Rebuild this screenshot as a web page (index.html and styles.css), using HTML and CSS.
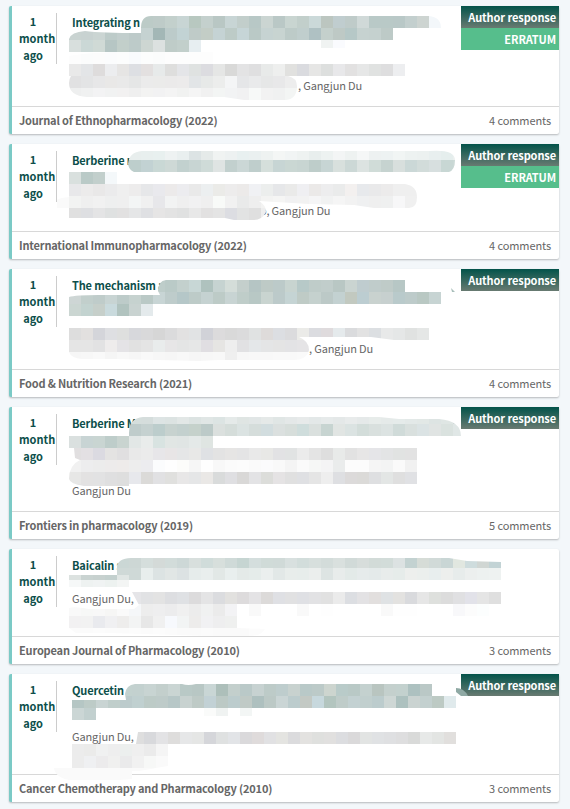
FILE: index.html
```html
<!DOCTYPE html>
<html lang="en">
<head>
    <meta charset="UTF-8" />
    <meta name="viewport" content="width=device-width, initial-scale=1.0"/>
    <title>Publications</title>
    <link rel="stylesheet" href="styles.css">
</head>
<body>
<div class="feed">
    <article class="card">
        <div class="card-body">
            <div class="date">1 month ago</div>
            <div class="info">
                <h2 class="title">Integrating n</h2>
                <p class="authors"><span class="gap" style="width:226px"></span>, Gangjun Du</p>
            </div>
            <div class="badges">
                <span class="badge response">Author response</span>
                <span class="badge erratum">ERRATUM</span>
            </div>
        </div>
        <div class="card-footer"><b>Journal of Ethnopharmacology (2022)</b><span>4 comments</span></div>
        <svg class="mosaic"></svg>
    </article>

    <article class="card short">
        <div class="card-body">
            <div class="date">1 month ago</div>
            <div class="info">
                <h2 class="title">Berberine r</h2>
                <p class="authors"><span class="gap" style="width:188px"></span>o, Gangjun Du</p>
            </div>
            <div class="badges">
                <span class="badge response">Author response</span>
                <span class="badge erratum">ERRATUM</span>
            </div>
        </div>
        <div class="card-footer"><b>International Immunopharmacology (2022)</b><span>4 comments</span></div>
        <svg class="mosaic"></svg>
    </article>

    <article class="card">
        <div class="card-body">
            <div class="date">1 month ago</div>
            <div class="info">
                <h2 class="title">The mechanism a</h2>
                <p class="authors"><span class="gap" style="width:237px"></span>, Gangjun Du</p>
            </div>
            <div class="badges">
                <span class="badge response">Author response</span>
            </div>
        </div>
        <div class="card-footer"><b>Food &amp; Nutrition Research (2021)</b><span>4 comments</span></div>
        <svg class="mosaic"></svg>
    </article>

    <article class="card tall">
        <div class="card-body">
            <div class="date">1 month ago</div>
            <div class="info">
                <h2 class="title">Berberine M</h2>
                <p class="authors">Gangjun Du</p>
            </div>
            <div class="badges">
                <span class="badge response">Author response</span>
            </div>
        </div>
        <div class="card-footer"><b>Frontiers in pharmacology (2019)</b><span>5 comments</span></div>
        <svg class="mosaic"></svg>
    </article>

    <article class="card short">
        <div class="card-body">
            <div class="date">1 month ago</div>
            <div class="info">
                <h2 class="title">Baicalin s</h2>
                <p class="authors more">Gangjun Du,</p>
            </div>
        </div>
        <div class="card-footer"><b>European Journal of Pharmacology (2010)</b><span>3 comments</span></div>
        <svg class="mosaic"></svg>
    </article>

    <article class="card">
        <div class="card-body">
            <div class="date">1 month ago</div>
            <div class="info">
                <h2 class="title">Quercetin</h2>
                <p class="authors more">Gangjun Du, </p>
            </div>
            <div class="badges">
                <span class="badge response">Author response</span>
            </div>
        </div>
        <div class="card-footer"><b>Cancer Chemotherapy and Pharmacology (2010)</b><span>3 comments</span></div>
        <svg class="mosaic"></svg>
    </article>
</div>

<script>
    // one entry per card: groups of { clip, rows }, a row is [x, y, height, colours of 12px cells]
    const mosaics = [
        [
            { clip: 'M132 22 Q132 10 142 10 H420 Q432 11 432 22 H384 V46 H192 V46 H60 V33 Q62 26 76 25 Q92 27 132 27Z', rows: [
                [132, 10, 12, 'bccbc7 becbc8 c3d0cc c8d5d4 b8c8c0 c4d0cd b9c7c4 c8d5d5 c2cecb b8c8c6 cbd5d2 bac8c6 c9d5d1 c2cfcb cbd9d9 bcc6c0 c0cdcf bfcbc9 d0d9d8 b9c9c7 b9c9c7 b9c8c7 c3cfce cdd4d1 f3f7fa'],
                [60, 22, 12, 'c9d3d1 c8d2d1 cbd5d3 bdcbc9 c2cecd bdcac9 c5d2d1 a3b7b6 bccbca c2d3d4 bfcbc8 c3cdc6 c5d3d4 bdcbc7 c6d5d7 bac9c6 c6d3d2 c8d4d1 bdcbc8 c0cecd afc1c3 c4d0cc bec9c5 b6c8c7 c6d2d0 c5d1cf bdcac7'],
                [60, 34, 12, 'd8dfdd cbd8d6 d0dad6 b6c6c4 c2cfca bdcbc9 cdd6d2 dce1e0 bfccc8 c2cfcb e7eef1']
            ] },
            { clip: 'M60 50 Q75 47 108 46 H204 V58 H396 V70 H279 Q288 72 288 80 Q288 93 277 94 H235 L215 91 H78 Q60 90 60 77 Q60 73 62 70 H60Z', rows: [
                [60, 46, 12, 'fdfdfd fbfcfc fcfcfc fbfcfd fcfdfd f9fbfd fcfdfd fbfcfc fdfdfd fdfdfd fdfdfd fdfdfd'],
                [60, 58, 12, 'e9e9e9 e3e5e7 dedcdc ecedef e6e5e4 dddfe3 e3e0e0 e7eaea dededd e4e5e8 dfe2e1 dcdce0 e5e6e5 d9d9d8 e3e3e4 dfdfe0 e8eae9 eeefee e1e1df dadbdf e6e6e5 dddfde e8e8ea e2e1e1 e6e7e7 e0e2e1 dededf edeef0'],
                [60, 70, 12, 'e1e1e2 e3e4e5 e7e7e8 e9e8e7 e9e9e9 e5e6e6 ebebeb ebebea ebeaea ecebeb e2e5e7 e7e9e8 ecedec f4f5f6 e5e6e8 e9eaeb e6e7e7 e8e8e9 ededed'],
                [60, 82, 12, 'eeefef f0f1f1 f3f3f4 f1f2f2 f2f1f1 efefef f3f3f2 f2f2f3 f4f4f4 f1f2f1 f5f5f5 f1f1f1 f3f5f4 f2f3f4 f1f1f2 f7f9f8 f2f2f2 f0f1f1 f3f5f4']
            ] }
        ],
        [
            { clip: 'M119 20 Q120 8 133 7 H420 Q446 5 446 16 Q446 26 440 28 H108 V40 H60 V28 H125 Q120 26 119 20Z', rows: [
                [108, 4, 12, 'e8eeed e8eeed e8efee e8f0ef eef2f2 e9efef dce3e4 e5eae9 f0f3f2 edf1f1 e8f0f0 eaf0f0 eef2f1 f4f6f5 f1f4f4 eef2f1 e8eeed edf2f1 f3f5f5 eef2f1 f5f7f7 edf1f1 edf2f2 f1f5f4 edf2f1 ecf1f0 e8efef e5eeed ebf0ef'],
                [108, 16, 12, 'bdcecc bdcecc c2d2d3 c9d8d5 ced9d6 c2d1cf c8d5d3 cfdbd8 dfe4e3 c2d0ce cbd7d6 bfcecc d5dfdb c7d5d4 cad7d3 c8d5d2 becdca c7d5d4 d8e0dd ccd8d6 dce3e1 d0dcd8 c6d3d0 d8dfdd cbd8d7 d2dcda d7dfdf c8d7d4 cbd9d6'],
                [60, 28, 12, 'd9e0de bacac7 c2cfcc f4f8fa']
            ] },
            { clip: 'M60 40 H396 Q408 42 408 53 Q408 64 400 64 H365 L345 61 L300 60 L250 57 Q257 61 257 68 Q253 76 245 76 H225 L216 74 H60 V64 H40 Q43 56 53 54 L60 53Z', rows: [
                [60, 40, 12, 'e8e8ea ecebeb e9e8e8 ebebec efefef edecec e6e7e9 e9e9ed eceaea ececef e9e9e9 eceff0 ebebe8 edecec eceae9 f0f1f4 eceeed e6e7e9 eaeae9 efeff2 ebe9e8 ededee eaebeb f3f0ef e7e9ec e9e9ea ecebeb efefef efefef'],
                [48, 52, 12, 'fafafa f2f3f2 efefef f1f1f1 eeefef efefef f3f5f5 f0f0f0 e7e7ea f2f3f3 efefef f1f1f2 efefef f8faf8 f1f1f1 e9eaea eeeeee f3f3f2 f5f5f4 f1f1f2 f2f2f2 f5f5f6 f1f2f2 f5f5f5 f2f2f2 eff0f1 efefef eff0f0 f7f7f8 f0f0f0'],
                [60, 64, 12, 'e0e0e0 dedfe2 e4e4e5 dfe1e1 e2e1e1 e5e6e7 dfe0e3 e6e5e5 e3e3e3 e0e1e1 e8e8e8 e2e1e1 e4e4e4 dcdde2 e2e3e3 dfdfdf eeeeee']
            ] }
        ],
        [
            { clip: 'M149 22 Q149 12 157 11 H396 V23 H432 V35 H144 V47 H60 V28 Q66 26 90 26 H151Z', rows: [
                [144, 11, 12, 'becdca bacac7 c3d0cd c8d7d6 afc2be c6d3d1 d4ddd9 c4cfcc b5c5c4 becac6 bccac9 c8d4d0 b7c9c8 bfccc9 c1cdcb b9c7c4 cad4d1 bfcccf c0cccb bfcbc8 b7c7c5 d3dad8'],
                [60, 23, 12, 'ced6d5 c2cfcc bfccca c8d4d3 bdcbc9 c6d2cf bac9c6 c8d5d5 becccb b5c7c8 bdcbc8 c5d2d1 bdcbc7 c8d4d3 bfcdc9 b8c8c5 c9d4d0 bccaca c5d4d4 bfcbc6 c5d1ce bcc9c7 c3d1d1 c2c9c0 bccdd1 c9d2cf c7d0cf b9cacb bdcbca b9c8c3 c7d4d3'],
                [60, 35, 12, 'cbd6d2 c3d3d0 c6cfca c9dadd b1c3bf c9d3d1 e4eaec']
            ] },
            { clip: 'M60 59 H420 V71 H385 L362 68 H290 Q300 72 300 81 Q298 91 284 91 H210 L190 92 L105 90 H73 Q62 89 60 83Z', rows: [
                [60, 59, 12, 'dddddd e2e0df d4d5da dedfe2 dedfde d7d8dc d9d9da d6d6d6 dbdbdc e2e1e1 e1e3e4 d1d2d8 dcdbdc d9d9d9 dbdbdc e0e2e2 dedbda dcdee2 dbdbdd ebebe8 dbdce0 dfdbdd e5eaec dadbdd e2e2e2 dcdfe2 e8e9e9 e5e7e7 e0e2e1 e5e7e6'],
                [60, 71, 12, 'e5e5e5 e5e5e5 e2e2e3 eeecec e4e3e6 e1e1e1 e4e4e4 e9ecec e7e6e7 e4e5e5 e6e7e7 e0dee2 e6e5e3 eeeeee e1e1e3 e4e7e9 e4e5e6 e4e4e4 e3e3e5 e5e4e6'],
                [60, 83, 12, 'f6f6f6 f7f7f7 f9f9f9 f5f5f5 f8f8f8 f6f6f6 f9f9f9 f7f7f7 f6f6f6 f8f8f8 f6f6f6 f7f7f7 f8f8f8 efefef f7f7f7 f8f8f8 f8f8f8 f9f9f9 f9f9f9 fafafa']
            ] },
            { clip: 'M442 19 L446 23 H443Z', rows: [[442, 18, 6, 'a9bfbb']] }
        ],
        [
            { clip: 'M120 26 Q120 11 134 10 H370 L390 12 H430 Q452 14 452 29 H204 V41 H60 V26 Q76 22 98 25 Q108 28 120 26Z', rows: [
                [120, 5, 12, 'd5dedc d5dddc dde4e4 dce3e2 e2e7e6 dce3e2 e0e6e5 dce4e3 e5eae9 dfe5e3 e1e6e6 e5e9e8 e0e6e5 e4e8e8 e7eaea e3e8e8 e6eaea e4e8e8 e8ebeb e5e9e9 e7ecea e5eae9 e5ebea e3e9e8 e2e8e6 dde4e3 dfe6e4 cfd8d7'],
                [120, 17, 12, 'bfcccb c5d1d0 bccdcc c7d2cf c3d0ce c5d1cb bccac8 dbe0de d5ddda dbe3e2 d5dddb d2dddf dbe0df d7dedb cfdddc dae0de c7d4d1 e1e5e3 dbe3e2 d3ddda d9e0de dce3e2 d0dbd9 d9e0de dbe3e4 e0e4e3 dae2df e0e7e6'],
                [60, 29, 12, 'dae0df c8d4d4 c9d5d2 becdca c9d4d0 e2e7e6 e9eceb d8e3e1 e1e6e4 e0e5e4 e4e9e8 dfe5e2']
            ] },
            { clip: 'M65 41 H408 V77 H120 V79 H75 Q61 77 60 72 Q60 58 71 53 L66 51Z', rows: [
                [60, 41, 12, 'e1dfe0 e3e0e3 dbdae1 e4e3e2 e0dfe0 e9e9e9 ebebeb e7e6e9 e8e5e6 e5e6e7 e8e8e7 dfe1e4 e3e3e3 e6e5e4 e4e4e5 e9e9e9 e8e8e6 e2e2e4 e1e3e3 ebebeb e4e4e4 dedede e8eae9 e2e2e2 e7e6e6 e5e5e8 e3e4e5 e1e3e2 e2e2e2'],
                [60, 53, 12, 'f1f1f1 ededee ececec edebeb eeebea ededed ececef fbfcfd fefefe fcfcfa f6f6f6 fefefe f8f8f8 fbfbfb fcfcfc fafafa fbfbfc f9f9f9 f4f4f4 fafafa f6f7f6 f4f4f5 eaecec fcfcfc fcfcfc f5f5f5 f3f4f4 fafafa f1f1f1'],
                [60, 65, 12, 'e7e7e6 e3e2e2 e2e2e3 dfdfe0 dedede e7e8ec dbdad8 e1e1e3 e0e0de e8e7e7 e5e6e7 eae8e6 d9dbdb dfdfe2 d9d8d7 e3e3e5 dcddda e5e3e4 e0e0e0 dfe0e3 e5e5e5 eeeeee dedfe2 dcdada dbdad8 dedfe1 e3e6e5 dfdfdf e0e1e4'],
                [60, 77, 12, 'e3e3e3 e3e2e3 e3e3e3 e0e0e0 dedede']
            ] }
        ],
        [
            { clip: 'M107 19 Q109 9 122 9 H440 L458 12 L492 13 V31 H120 V38 H60 V26 H108Z', rows: [
                [108, 7, 12, 'cbd7d5 cdd7d5 d5dedc d4dad8 d2dcda cdd8d7 d8dfdd d0dcda d7dfdc cfdad8 c6d5d2 d4dedd d0dbd8 d0dad8 d8e0df d2dddb d7dfdd d3dcda d9e0de d1dad8 d7dddb d2dbd8 d2dcd9 dce2e2 c3d2d1 d6dcd7 d1dad8 c9d6d5 e1e7e0 cedcdd d0d6d3 c2d3d5 dfe5e0 dce5e4'],
                [108, 19, 12, 'cfd9d7 cfd9d7 e8eeed dce3e3 e1e6e5 dce2e3 e6eceb e9eeed e2e8e6 e9efee e4eae8 e5ecea ebefee e2e8e7 e8edeb e7edeb ebeeed dde4e3 e8eceb e3eae8 e6ebeb e4eaea e8eceb e6ecea edefed ebefed e8eeee edefed e7eceb ecefee edf1f0 eef2f1 edf1f0 e6f0ee'],
                [60, 26, 5, 'dce2e0 c9d3d1 c7d1cf c3d0ce e0e6e4'],
                [60, 31, 7, 'f6f8f8 eef2f1 f0f3f3 edf2f0 f3f5f4']
            ] },
            { clip: 'M123 43 H492 V67 H228 V79 L256 80 Q253 87 240 87 H200 L100 84 H67 L60 79 V59 Q65 57 80 60 L125 60 L130 56Z', rows: [
                [120, 43, 12, 'e5e5e8 e1e2e4 e3e3e3 dddee1 dfe1e4 dcdbdc e4e4e5 dbdcdf e2e1df dddbdc e4e3e5 dcdad9 dfe0e4 e1e1e2 dfe0e4 e2e2e4 e1e1e1 ebebeb dcdee2 e3e2e4 e2dfde dfe2e4 e3e2e0 d9dadd e6e6e6 dee0dd dcdcdc e0e0e2 e2e2e9 e5e5e5 dfdfdf f0f6f8'],
                [60, 55, 12, 'f9f9f9 f7f8f7 f8f8f8 f6f6f5 fafafa f5f7f9 ededed eeeeef ececed f0f0f0 ececec f0f1f1 ebebeb f3f3f5 ffffff f9f9f9 ffffff ffffff ffffff f9f9f9 ffffff fefefe ffffff ffffff ffffff ffffff f9f9f9 fefefe fefefe ffffff ffffff ffffff f8f8fa fcfcfc fcfefe'],
                [60, 67, 12, 'f2f1f2 f2f2f2 e9eaee f0f0f2 eeedec f3f4f4 e7e7e7 f0f0f0 f7f9fd f2f4f4 edeceb f1f1f3 eeeeef eff0ef'],
                [60, 79, 8, 'fbfbfb fbfbfb fcfcfc fbfbfb fbfbfb fcfcfc fbfbfb fcfcfc fbfbfb fafafa fafafa fbfbfb fafafa fafafa fafafa fcfcfc fcfcfc']
            ] }
        ],
        [
            { clip: 'M116 20 Q117 11 126 10 H173 Q179 12 187 10 H423 V22 H447 V34 H87 V46 H63 V26 H117Z', rows: [
                [111, 10, 12, 'c3d2cf c3d1cf c8d4d2 c3cfcc cad5d3 b9c9c6 b8c7c4 c9d6d5 adbfba c3cfcc bac9c8 c7d2d1 bdcbc8 becdcd c8d2cf b9c9c8 bccac8 cdd5cf b9cbc9 b9c9c6 c4d1cf b9c5c0 c4d0cd c3d1ce adc1c0 bac8c6'],
                [63, 22, 12, 'b5c6c4 bdcbc7 c9d4d3 c0cecb bccbcc c0d0d0 bdcbc7 becbc9 b7c7c7 c8d2d0 becac6 c2d1d5 bcc9c5 bccccd c0cac6 aec0bf bcc9c6 cad5d5 bccccd c3c9c4 c7d8dd b3c5bf bfccc9 c3d1d2 c1cfce bccccd ced7d5 adc1bf cad3d1 c3d0cf bdcac4 e0eaec'],
                [63, 34, 12, 'cbd6d5 c2d0cf']
            ] },
            { clip: 'M129 58 H447 V70 H159 V92 L130 97 H123 V105 L110 106 H60 Q46 103 45 94 H63 V70 H127Z', rows: [
                [123, 58, 12, 'dedede d8d9dc e3e3e5 dedddc e6e7e8 e5e6e5 d5d6da dfe1e1 e2e4e7 dad9db dfdbdb e1e1e3 e4e4e1 dbdbdd e3e2e0 dfe0de e1e0df dcdde0 dad9da e2e4e3 e0e2e4 dfe0e2 dededf d9dad9 e7e9e8 e3e5e3 e1dfdd e4e5e9 f0f1f0'],
                [63, 70, 12, 'ececec ebebea f0f1f1 eeeeee ecefee efefef ebebeb f5f5f5'],
                [63, 82, 12, 'ececec eff0f2 ecebec f0f0ef eaeaeb f1f1f1 f7f8f7 fafafa'],
                [39, 94, 12, 'fafafa fafafa fafafa fafafa fafafa fafafa fafafa fafafa fafafa fcfcfc']
            ] },
            { clip: 'M447 14 Q455 14 459 22 H452 L447 18Z', rows: [[447, 14, 8, '8fa9a4']] }
        ]
    ];

    // stray single cells that sit outside the main strokes
    const strays = {
        0: [[312, 34, 'f0f3f2'], [324, 34, 'fafbfe']],
        5: [[195, 34, 'fafbfa'], [207, 34, 'f0f3f2'], [231, 34, 'f3f6f5']]
    };

    document.querySelectorAll('.mosaic').forEach((svg, i) => {
        let out = '';
        (strays[i] || []).forEach(([x, y, c]) => {
            out += `<rect x="${x}" y="${y}" width="12" height="8" fill="#${c}"/>`;
        });
        mosaics[i].forEach((group, g) => {
            const id = `stroke-${i}-${g}`;
            out += `<clipPath id="${id}"><path d="${group.clip}"/></clipPath><g clip-path="url(#${id})">`;
            group.rows.forEach(([x, y, h, colors]) => {
                colors.split(' ').forEach((c, n) => {
                    out += `<rect x="${x + n * 12}" y="${y}" width="12" height="${h}" fill="#${c}"/>`;
                });
            });
            out += '</g>';
        });
        svg.innerHTML = out;
    });
</script>
</body>
</html>
```
FILE: styles.css
```css
* {
    box-sizing: border-box;
}
body {
    margin: 0;
    background: #f3f7fa;
    font-family: "Noto Sans CJK SC", "Open Sans", sans-serif;
    font-size: 11px;
    color: #666;
    height: 809px;
    overflow: hidden;
}
.feed {
    display: flex;
    flex-direction: column;
    gap: 10px;
    padding: 6px 11px 7px 9px;
}
.card {
    position: relative;
    height: 128px;
    display: flex;
    flex-direction: column;
    background: #fff;
    border-left: 3px solid #7bcac6;
    border-radius: 2px;
    box-shadow: 0 1px 2px rgba(0,0,0,0.25);
}
.card.short { height: 115px; }
.card.tall { height: 132px; }
.card-body {
    flex: 1;
    display: flex;
    align-items: flex-start;
}
.date {
    width: 45px;
    height: 51px;
    margin-top: 7px;
    padding: 0 9px 0 7px;
    border-right: 1px solid #ccc;
    color: #0d4f4b;
    font-weight: bold;
    font-size: 11px;
    line-height: 17px;
    text-align: center;
}
.info {
    flex: 1;
    align-self: stretch;
    display: flex;
    flex-direction: column;
    padding: 8px 0 13px 15px;
    white-space: nowrap;
}
.title {
    margin: 0;
    color: #0d4f4b;
    font-size: 11px;
    line-height: 16px;
    letter-spacing: -0.15px;
}
.authors {
    margin: auto 0 0;
    line-height: 16px;
    letter-spacing: -0.15px;
}
.authors.more { margin-bottom: 17px; }
.gap { display: inline-block; }
.badges {
    width: 98px;
    display: flex;
    flex-direction: column;
}
.badge {
    height: 22px;
    padding-right: 3px;
    color: #fff;
    font-size: 11px;
    font-weight: bold;
    line-height: 22px;
    letter-spacing: -0.1px;
    text-align: right;
    white-space: nowrap;
}
.badge.response { background: linear-gradient(#03534a, #687a71); }
.badge.erratum { background: #56be8c; }
.card-footer {
    height: 28px;
    display: flex;
    justify-content: space-between;
    padding: 0 8px 0 7px;
    border-top: 1px solid #d8d8d8;
    line-height: 26px;
}
.card-footer b { letter-spacing: -0.18px; }
.card-footer span { letter-spacing: -0.1px; }
.mosaic {
    position: absolute;
    top: 0;
    left: -3px;
    width: 550px;
    height: 100%;
    pointer-events: none;
}
```
